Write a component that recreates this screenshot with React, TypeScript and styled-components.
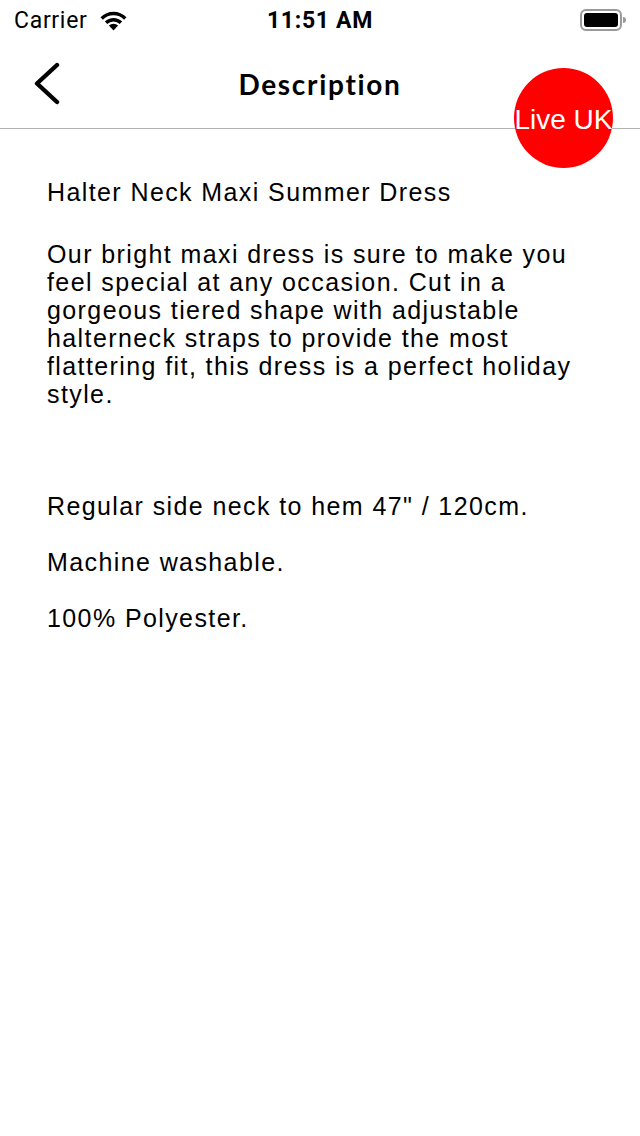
import React from "react";
import styled, { createGlobalStyle } from "styled-components";

const Global = createGlobalStyle`
  html, body { margin: 0; padding: 0; background: #fff; }
  body { width: 640px; height: 1136px; overflow: hidden; font-family: "Liberation Sans", Arial, sans-serif; color: #000; }
`;

const Screen = styled.div`
  width: 640px;
  height: 1136px;
  display: flex;
  flex-direction: column;
  background: #fff;
`;

const StatusBar = styled.div`
  height: 40px;
  display: grid;
  grid-template-columns: 1fr auto 1fr;
  align-items: center;
  padding: 0 14px;
  font-family: "Roboto", "Liberation Sans", sans-serif;
  font-size: 23px;
  letter-spacing: 0.7px;
`;

const StatusLeft = styled.div`
  display: flex;
  align-items: center;
  gap: 10px;
`;

const StatusTime = styled.div`
  font-weight: 700;
`;

const StatusRight = styled.div`
  display: flex;
  justify-content: flex-end;
  align-items: center;
`;

const NavBar = styled.div`
  position: relative;
  height: 88px;
  border-bottom: 1px solid #b2b2b2;
  display: flex;
  align-items: center;
  justify-content: center;
`;

const BackButton = styled.button`
  position: absolute;
  left: 33px;
  top: 22px;
  width: 28px;
  height: 44px;
  border: 0;
  background: transparent;
  padding: 0;
  display: block;
`;

const NavTitle = styled.h1`
  margin: 0;
  font-family: "Lato", "Noto Sans", sans-serif;
  font-weight: 700;
  font-size: 28px;
  letter-spacing: 1.7px;
`;

const LiveBadge = styled.div`
  position: absolute;
  left: 514px;
  top: 28px;
  width: 99px;
  height: 100px;
  padding-top: 3px;
  box-sizing: border-box;
  border-radius: 50%;
  background: #ff0000;
  color: #fff;
  display: flex;
  align-items: center;
  justify-content: center;
  font-family: "Liberation Sans", Arial, sans-serif;
  font-size: 28px;
  white-space: nowrap;
  z-index: 2;
`;

const Content = styled.div`
  width: 550px;
  padding: 48px 0 0 47px;
  display: flex;
  flex-direction: column;
`;

const Title = styled.h2`
  margin: 0 0 33px;
  font-family: "Liberation Sans", Arial, sans-serif;
  font-weight: 400;
  font-size: 25px;
  letter-spacing: 1.4px;
  line-height: 30px;
`;

const Body = styled.p`
  margin: 0;
  font-family: "Liberation Sans", Arial, sans-serif;
  font-weight: 400;
  font-size: 25px;
  letter-spacing: 1.4px;
  line-height: 28px;
  white-space: pre-wrap;
`;

const Wifi = () => (
  <svg width="31" height="22" viewBox="0 0 30 22">
    <path d="M15 21.5 L10.4 16.6 A6.6 6.6 0 0 1 19.6 16.6 Z" fill="#000" />
    <path d="M6.4 12.6 A12 12 0 0 1 23.6 12.6 L21.2 15.1 A8.6 8.6 0 0 0 8.8 15.1 Z" fill="#000" />
    <path d="M2 8.2 A18.2 18.2 0 0 1 28 8.2 L25.6 10.7 A14.8 14.8 0 0 0 4.4 10.7 Z" fill="#000" />
  </svg>
);

const Battery = () => (
  <svg width="46" height="22" viewBox="0 0 46 22">
    <rect x="1" y="1" width="40" height="20" rx="5" fill="none" stroke="#9a9a9a" strokeWidth="2" />
    <rect x="4" y="4" width="34" height="14" rx="3" fill="#000" />
    <path d="M43 8 A3 3 0 0 1 43 14 Z" fill="#9a9a9a" />
  </svg>
);

const Chevron = () => (
  <svg width="28" height="44" viewBox="0 0 28 44">
    <path d="M24 3 L4 21.5 L24 40" fill="none" stroke="#000" strokeWidth="4.4" strokeLinecap="round" strokeLinejoin="round" />
  </svg>
);

const bodyText = `Our bright maxi dress is sure to make you feel special at any occasion. Cut in a gorgeous tiered shape with adjustable halterneck straps to provide the most flattering fit, this dress is a perfect holiday style.



Regular side neck to hem 47" / 120cm.

Machine washable.

100% Polyester.`;

export default function App() {
  return (
    <Screen>
      <Global />
      <StatusBar>
        <StatusLeft>
          <span>Carrier</span>
          <Wifi />
        </StatusLeft>
        <StatusTime>11:51 AM</StatusTime>
        <StatusRight>
          <Battery />
        </StatusRight>
      </StatusBar>
      <NavBar>
        <BackButton aria-label="Back">
          <Chevron />
        </BackButton>
        <NavTitle>Description</NavTitle>
        <LiveBadge>Live UK</LiveBadge>
      </NavBar>
      <Content>
        <Title>Halter Neck Maxi Summer Dress</Title>
        <Body>{bodyText}</Body>
      </Content>
    </Screen>
  );
}
